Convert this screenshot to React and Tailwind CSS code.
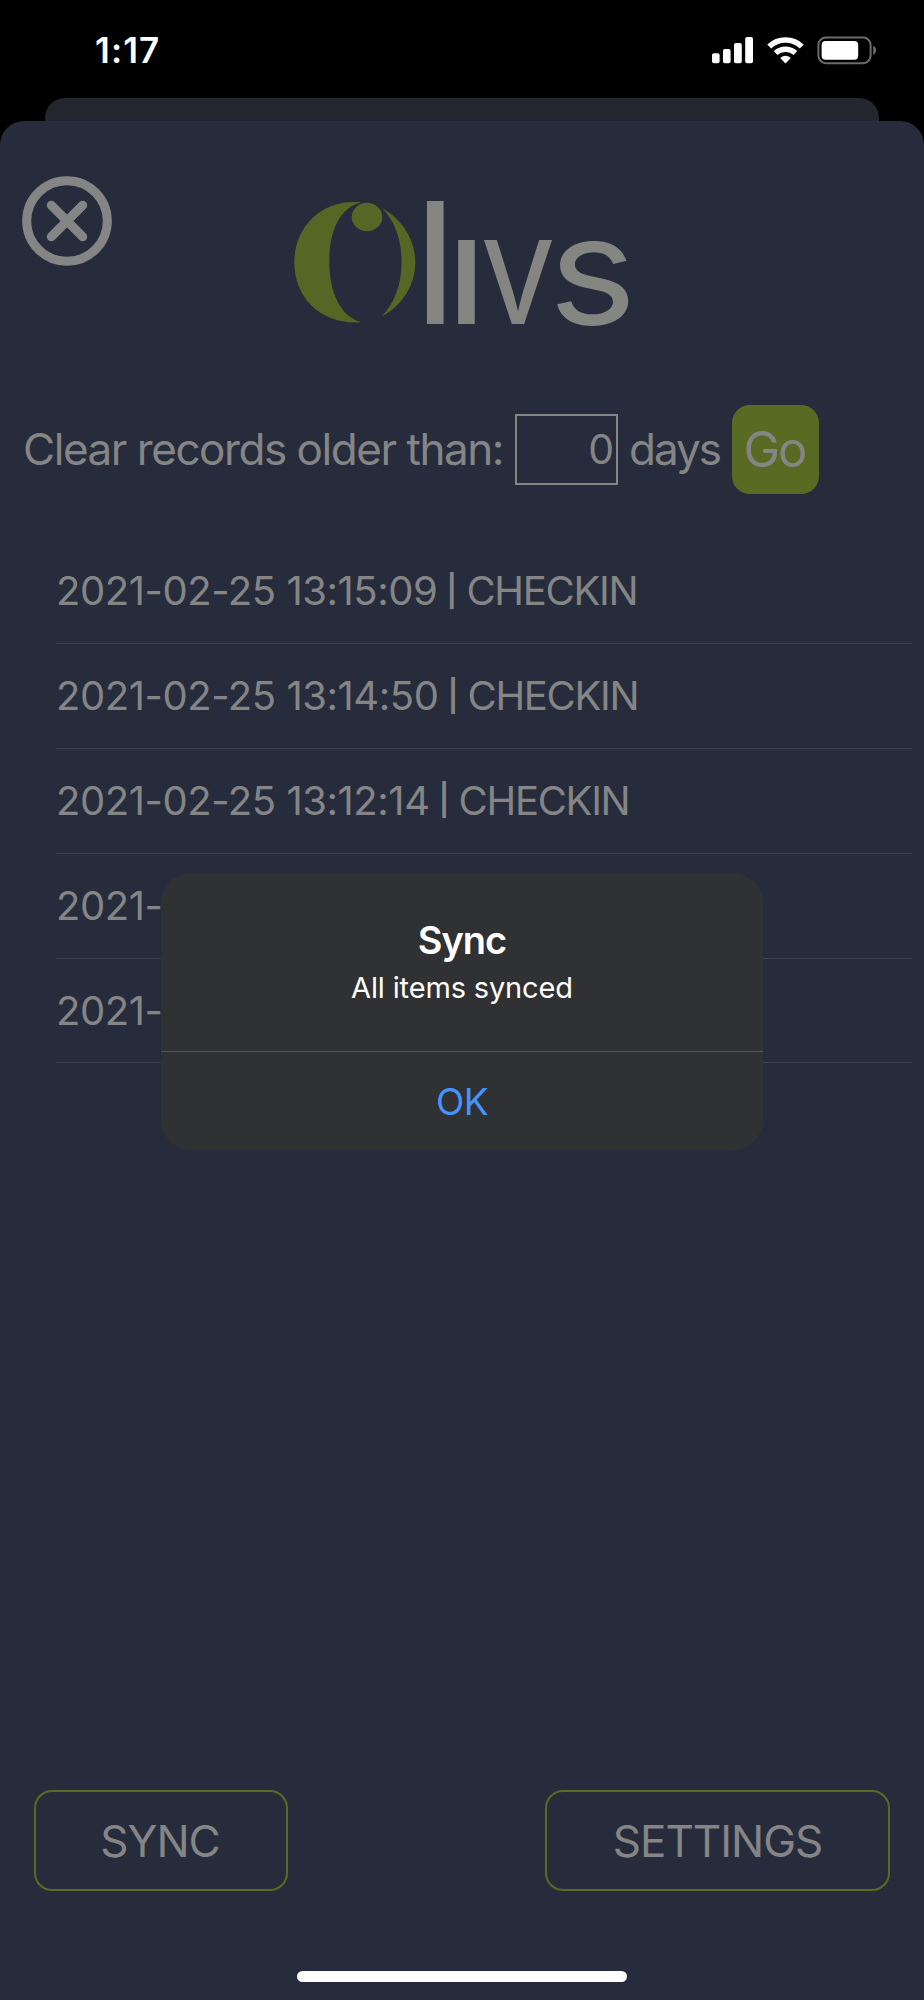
import React from 'react';

const records = [
  { time: '2021-02-25 13:15:09', type: 'CHECKIN' },
  { time: '2021-02-25 13:14:50', type: 'CHECKIN' },
  { time: '2021-02-25 13:12:14', type: 'CHECKIN' },
  { time: '2021-' },
  { time: '2021-' }
];

const StatusBar = () => (
  <div className="h-[98px] shrink-0 flex items-start justify-between pl-[95px] pr-[47px] text-white">
    <span className="mt-[29px] text-[35px] leading-[42px] font-semibold tracking-[1.1px]">1:17</span>
    <div className="mt-[36px] flex items-start">
      {/* Signal */}
      <svg width="42" height="28" viewBox="0 0 42 28" fill="currentColor">
        <rect x="0" y="17.3" width="7.6" height="10" rx="2" />
        <rect x="11" y="13" width="7.6" height="14.3" rx="2" />
        <rect x="22" y="7" width="7.8" height="20.3" rx="2" />
        <rect x="33.2" y="1" width="7.8" height="26.3" rx="2" />
      </svg>
      {/* Wifi */}
      <svg className="ml-[13px]" width="37" height="28" viewBox="0 0 37 28" fill="none" stroke="currentColor">
        <path d="M2.2 10.6 A23.5 23.5 0 0 1 34.8 10.6" strokeWidth="5.6" />
        <path d="M8.6 17.1 A14.6 14.6 0 0 1 28.4 17.1" strokeWidth="5.4" />
        <path d="M18.5 27.4 L13.2 22 Q18.5 17.6 23.8 22 Z" fill="currentColor" stroke="none" />
      </svg>
      {/* Battery */}
      <svg className="ml-[13.5px]" width="60" height="29" viewBox="0 0 60 29">
        <rect x="1.4" y="1.6" width="52.2" height="25.6" rx="7.5" fill="none" stroke="#6b6b6b" strokeWidth="2" />
        <rect x="4.6" y="5" width="36.6" height="18.8" rx="4" fill="#fff" />
        <path d="M56.2 9.6 Q59 11.2 59 14.4 Q59 17.6 56.2 19.2 Z" fill="#6b6b6b" />
      </svg>
    </div>
  </div>
);

const CloseIcon = () => (
  <svg width="90" height="90" viewBox="0 0 90 90" fill="none" stroke="#858585">
    <circle cx="45" cy="45" r="40.3" strokeWidth="9" />
    <path d="M29.3 29.3 L60.7 60.7 M60.7 29.3 L29.3 60.7" strokeWidth="9" strokeLinecap="round" />
  </svg>
);

const Logo = () => (
  <svg width="350" height="220" viewBox="0 -45 350 220" aria-label="Olivs">
    <g fill="#566624">
      <path d="M67.3 2.3 C28 -2 0.3 27 0.3 62 C0.3 99 28 125 67.3 122.3 C45 116 35.3 90 35.3 62 C35.3 32 45 8 67.3 2.3 Z" />
      <path d="M88 8.3 C108 19 121.3 40 121.3 62 C121.3 85 108 106 88 116.3 C101 102 107.6 84 107.6 62 C107.6 40 101 21 88 8.3 Z" />
      <ellipse cx="73" cy="17" rx="15.3" ry="14.3" />
    </g>
    <g fill="#858582" className="font-['Inter']">
      <text x="121.8" y="123.5" fontSize="169" fontWeight="450" textLength="39" lengthAdjust="spacingAndGlyphs">l</text>
      <text x="153" y="123.5" fontSize="154" fontWeight="480">ı</text>
      <text x="186.5" y="123.5" fontSize="154" textLength="75" lengthAdjust="spacingAndGlyphs">v</text>
      <text x="254.5" y="123.5" fontSize="151" fontWeight="400" textLength="88" lengthAdjust="spacingAndGlyphs">s</text>
    </g>
  </svg>
);

const RecordRow = ({ time, type }) => (
  <li className="h-[104.9px] flex items-center border-b border-[#3d4252] text-[40px] whitespace-nowrap">
    <span className="tracking-[-0.45px]">{time}</span>
    {type && (
      <>
        <span className="w-[29px] text-center text-[31px] font-semibold">|</span>
        <span className="tracking-[-1.3px]">{type}</span>
      </>
    )}
  </li>
);

const SyncAlert = () => (
  <div className="absolute left-[161px] top-[873px] w-[602px] h-[277px] rounded-[30px] bg-[#2f3133] flex flex-col text-center">
    <div className="h-[179px] border-b border-[#55575a] pt-[43px] text-white">
      <h2 className="text-[38px] leading-[48px] font-semibold tracking-[-1px]">Sync</h2>
      <p className="text-[29px] leading-[36px] mt-[6px] tracking-[-0.15px]">All items synced</p>
    </div>
    <button className="flex-1 pt-[2px] text-[37px] tracking-[-0.6px] text-[#4593fb]">OK</button>
  </div>
);

export default function App() {
  return (
    <div className="relative w-[924px] h-[2000px] overflow-hidden bg-black flex flex-col font-['Inter',sans-serif]">
      <StatusBar />
      {/* Edge of the screen stacked behind the sheet */}
      <div className="h-[23px] shrink-0 mx-[45px] rounded-t-[20px] bg-[#23262f]" />

      <div className="flex-1 flex flex-col rounded-t-[24px] bg-[#272c3c] text-[#858585]">
        <header className="h-[284px] flex items-start">
          <button className="ml-[22px] mt-[55px]">
            <CloseIcon />
          </button>
          <div className="ml-[182px] mt-[34px]">
            <Logo />
          </div>
        </header>

        <div className="h-[89px] flex items-center pl-[23px] text-[44px]">
          <span className="w-[492px] -mt-[2px] whitespace-nowrap tracking-[-1.45px]">Clear records older than:</span>
          <div className="w-[103px] h-[71px] border-2 border-[#858585] flex items-center justify-end pr-[2px] text-[41px]">0</div>
          <span className="ml-[11px] -mt-[2px] w-[103px] tracking-[-2px]">days</span>
          <button className="w-[87px] h-[89px] rounded-[18px] bg-[#596a22] pr-[2px] text-[49px] tracking-[-2px]">Go</button>
        </div>

        <ul className="mt-[45px] ml-[56px] mr-[12px]">
          {records.map((record, index) => (
            <RecordRow key={index} {...record} />
          ))}
        </ul>

        <footer className="mt-auto mb-[80px] px-[34px] flex justify-between text-[44px] tracking-[-1px]">
          <button className="w-[254px] h-[101px] rounded-[18px] border-2 border-[#596a22] pr-[2px]">SYNC</button>
          <button className="w-[345px] h-[101px] rounded-[18px] border-2 border-[#596a22]">SETTINGS</button>
        </footer>
        <div className="mb-[18px] h-[11px] w-[330px] self-center rounded-full bg-white" />
      </div>

      <SyncAlert />
    </div>
  );
}
